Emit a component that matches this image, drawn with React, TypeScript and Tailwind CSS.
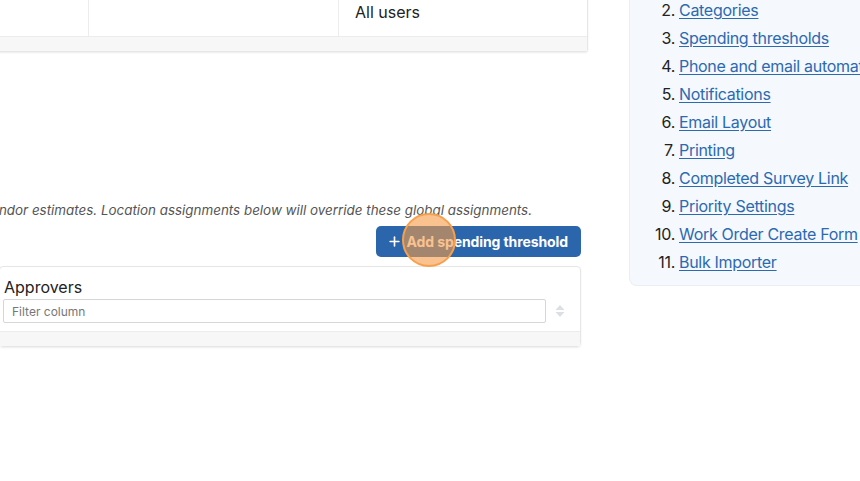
import { Plus } from "lucide-react";

const guideLinks = [
  "Users",
  "Categories",
  "Spending thresholds",
  "Phone and email automation",
  "Notifications",
  "Email Layout",
  "Printing",
  "Completed Survey Link",
  "Priority Settings",
  "Work Order Create Form",
  "Bulk Importer",
];

function SortArrows() {
  return (
    <svg width="10" height="14" viewBox="0 0 10 14" className="shrink-0">
      <path d="M5 1 L9.5 6 H0.5 Z" fill="#dcdfe3" />
      <path d="M5 13 L9.5 8 H0.5 Z" fill="#dcdfe3" />
    </svg>
  );
}

function TableFooter() {
  return <div className="h-[14px] bg-[#f7f7f7]" />;
}

export default function App() {
  return (
    <div
      className="relative flex h-[481px] w-[860px] overflow-hidden bg-white text-[#222]"
      style={{ fontFamily: "Inter, 'Noto Sans', sans-serif" }}
    >
      <main className="ml-[-300px] flex w-[888px] shrink-0 flex-col">
        {/* global approvers table */}
        <div className="-mt-[12px] rounded-b-[3px] border-x border-b border-[#e6e6e6] shadow-[0_1px_2px_rgba(0,0,0,0.08)]">
          <div className="grid grid-cols-[388px_250px_250px] border-b border-[#ececec]">
            <div className="border-r border-[#ececec] px-4 py-3 text-base leading-6">&nbsp;</div>
            <div className="border-r border-[#ececec] px-4 py-3 text-base leading-6">&nbsp;</div>
            <div className="px-4 py-3 text-base leading-6">All users</div>
          </div>
          <TableFooter />
        </div>

        <section className="mt-[148px] flex flex-col pr-[7px]">
          <div className="flex justify-end pr-[49px]">
            <p className="whitespace-nowrap text-[13.4px] italic leading-5 text-[#555]">
              Thresholds apply to vendor estimates. Location assignments below will override these global assignments.
            </p>
          </div>

          <button
            type="button"
            className="mt-[6px] flex h-[31px] items-center gap-[5px] self-end rounded-[5px] bg-[#2b66ad] pl-[11px] pr-[13px] text-[14px] font-bold tracking-[-0.1px] text-white"
          >
            <Plus size={15} strokeWidth={2.6} />
            Add spending threshold
          </button>

          <div className="mt-[9px] ml-[299px] rounded-[4px] border border-[#e6e6e6] shadow-[0_1px_2px_rgba(0,0,0,0.08)]">
            <div className="border-b border-[#ececec] px-[3px] pb-[8px] pt-[8px]">
              <div className="pl-[1px] text-base leading-6">Approvers</div>
              <div className="flex items-center gap-[9px]">
                <input
                  readOnly
                  placeholder="Filter column"
                  className="h-[24px] w-[543px] rounded-[2px] border border-[#d6d6d6] px-[8px] text-[12px] text-[#333] placeholder:text-[#777] outline-none"
                />
                <SortArrows />
              </div>
            </div>
            <TableFooter />
          </div>
        </section>
      </main>

      {/* settings guide */}
      <aside className="ml-[41px] h-[286px] w-[260px] shrink-0 rounded-bl-[8px] border-b border-l border-[#e9eef3] bg-[#f5f8fc]">
        <ol className="-mt-[32px] flex flex-col pl-[20px] pb-[10px]">
          {guideLinks.map((label, i) => (
            <li
              key={label}
              className="flex h-[28px] items-center gap-[4px] whitespace-nowrap text-base tracking-[-0.3px]"
            >
              <span className="w-[25px] shrink-0 text-right">{i + 1}.</span>
              <a href="#" className="text-[#2b6ab1] underline underline-offset-2">
                {label}
              </a>
            </li>
          ))}
        </ol>
      </aside>

      {/* click marker */}
      <div className="pointer-events-none absolute left-[402px] top-[213px] h-[54px] w-[54px] rounded-full border-2 border-[#f6a04c] bg-[#f59a45]/60" />
    </div>
  );
}
